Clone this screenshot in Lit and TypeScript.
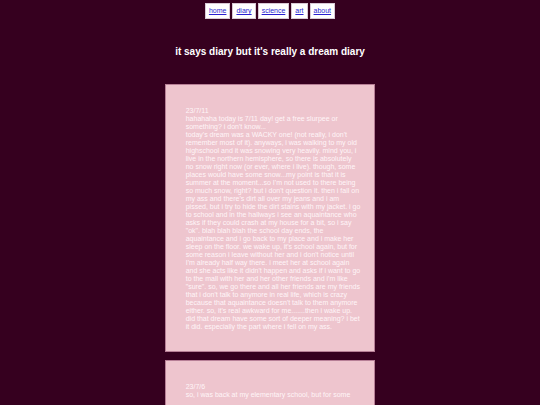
import { LitElement, html, css } from "lit";
import { customElement, property } from "lit/decorators.js";

interface Entry {
  date: string;
  lines: string[];
}

const entries: Entry[] = [
  {
    date: "23/7/11",
    lines: [
      "hahahaha today is 7/11 day! get a free slurpee or",
      "something? i don't know...",
      "today's dream was a WACKY one! (not really, i don't",
      "remember most of it). anyways, i was walking to my old",
      "highschool and it was snowing very heavily. mind you, i",
      "live in the northern hemisphere, so there is absolutely",
      "no snow right now (or ever, where i live). though, some",
      "places would have some snow...my point is that it is",
      "summer at the moment...so I'm not used to there being",
      "so much snow, right? but i don't question it. then i fall on",
      "my ass and there's dirt all over my jeans and i am",
      "pissed, but i try to hide the dirt stains with my jacket. i go",
      "to school and in the hallways i see an aquaintance who",
      "asks if they could crash at my house for a bit, so i say",
      "\"ok\". blah blah blah the school day ends, the",
      "aquaintance and i go back to my place and i make her",
      "sleep on the floor. we wake up, it's school again, but for",
      "some reason i leave without her and i don't notice until",
      "I'm already half way there. i meet her at school again",
      "and she acts like it didn't happen and asks if i want to go",
      "to the mall with her and her other friends and i'm like",
      "\"sure\". so, we go there and all her friends are my friends",
      "that i don't talk to anymore in real life, which is crazy",
      "because that aquaintance doesn't talk to them anymore",
      "either. so, it's real awkward for me.......then i wake up.",
      "did that dream have some sort of deeper meaning? i bet",
      "it did. especially the part where i fell on my ass.",
    ],
  },
  {
    date: "23/7/6",
    lines: ["so, i was back at my elementary school, but for some"],
  },
];

@customElement("diary-entry")
export class DiaryEntry extends LitElement {
  @property({ attribute: false }) entry!: Entry;

  static styles = css`
    :host {
      display: block;
    }
    .card {
      box-sizing: border-box;
      padding: 22px 20px 20px;
      border: 1px solid #b77f96;
      background: #eec5ce;
      color: #fff5f8;
    }
    .text {
      margin: 0;
      line-height: 8px;
      white-space: pre;
    }
  `;

  render() {
    return html`<article class="card">
      <p class="text">${[this.entry.date, ...this.entry.lines].join("\n")}</p>
    </article>`;
  }
}

@customElement("app-root")
export class AppRoot extends LitElement {
  static styles = css`
    :host {
      display: block;
      box-sizing: border-box;
      height: 100vh;
      overflow: hidden;
      background: #36001f;
      font-family: "Liberation Sans", Arial, sans-serif;
      font-size: 7px;
    }
    .nav {
      display: flex;
      justify-content: center;
      gap: 2px;
      padding-top: 3px;
    }
    .link {
      padding: 3px;
      border: 1px solid #d9c9d6;
      background: #fff;
      color: #2a1fd0;
      line-height: 8px;
    }
    .title {
      margin: 27px 0 26px;
      color: #fff;
      font-size: 10px;
      line-height: 12px;
      text-align: center;
    }
    .entries {
      display: grid;
      grid-template-columns: 39%;
      justify-content: center;
      gap: 8px;
    }
  `;

  render() {
    return html`
      <nav class="nav">
        ${["home", "diary", "science", "art", "about"].map(
          (name) => html`<a class="link" href="#${name}">${name}</a>`
        )}
      </nav>
      <h1 class="title">it says diary but it's really a dream diary</h1>
      <main class="entries">
        ${entries.map((entry) => html`<diary-entry .entry=${entry}></diary-entry>`)}
      </main>
    `;
  }
}
